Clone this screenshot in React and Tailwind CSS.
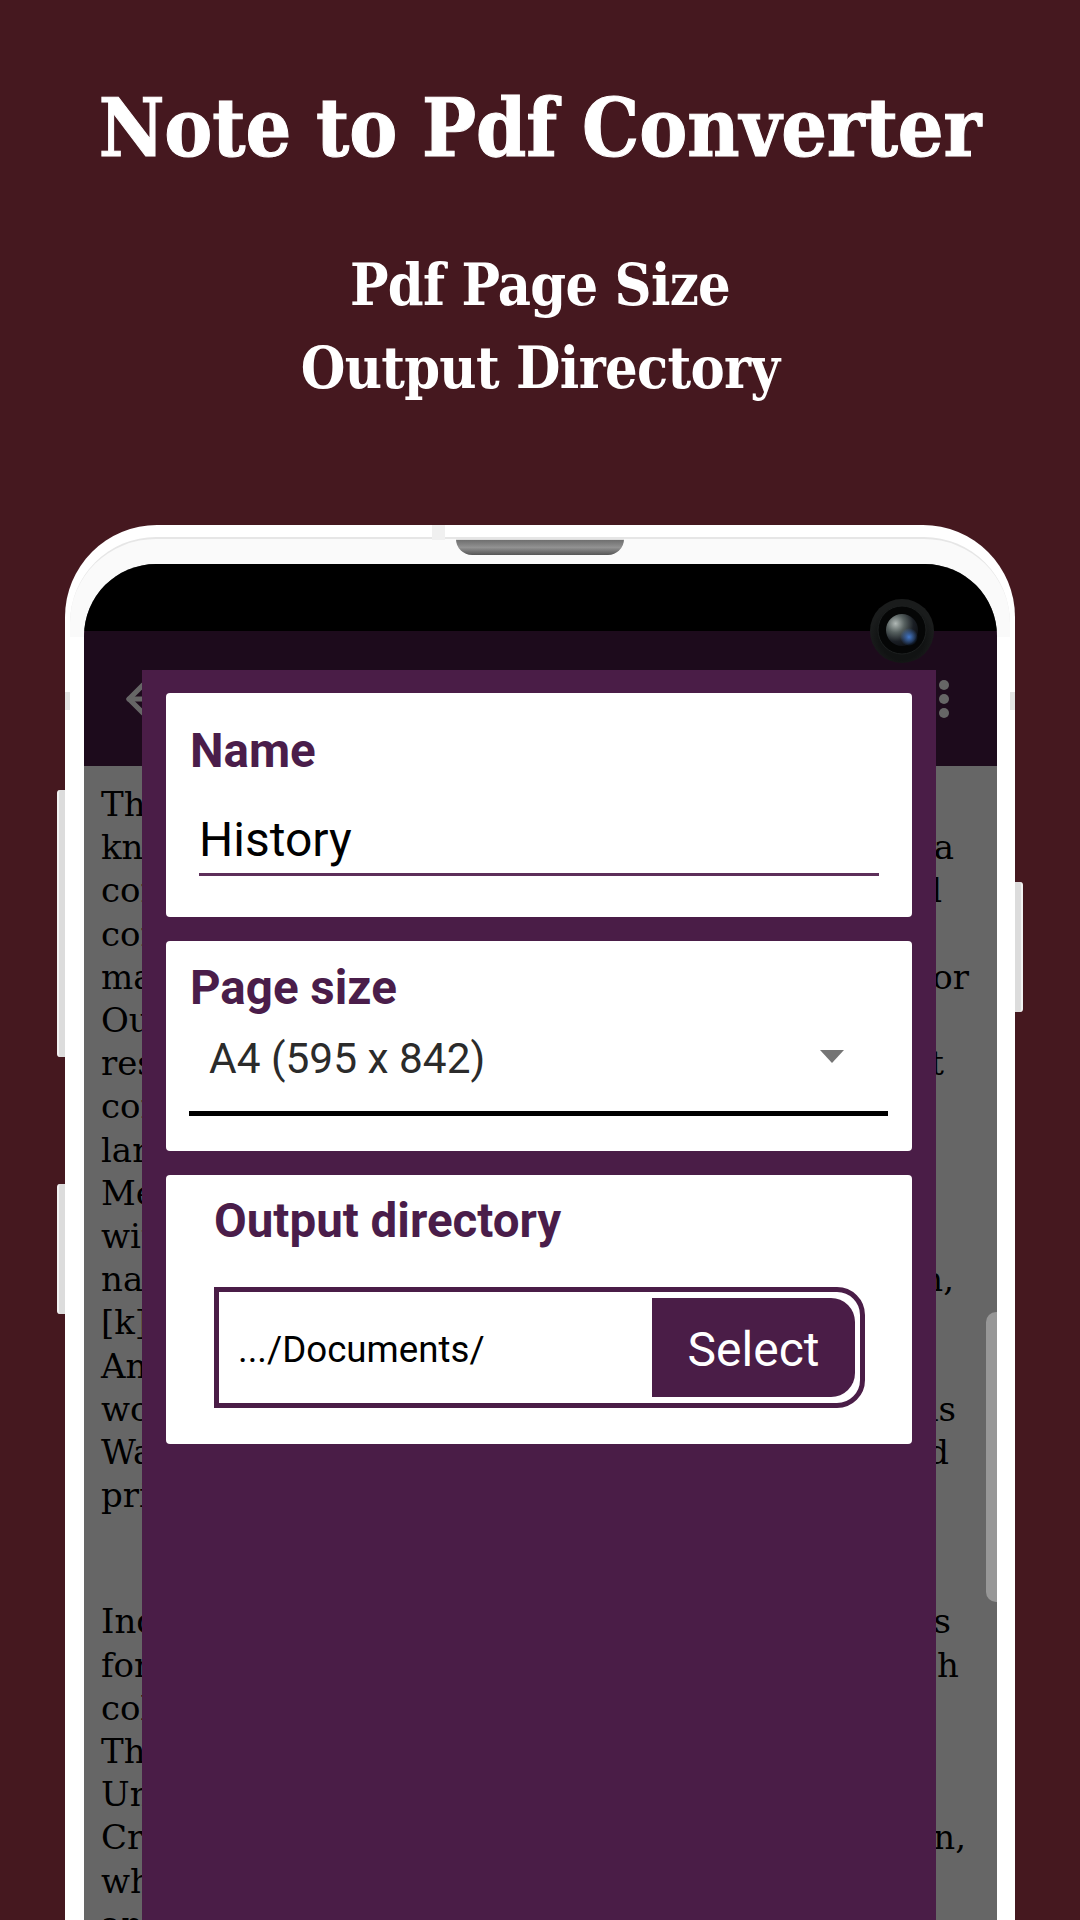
import React from "react";
import { ArrowLeft } from "lucide-react";

const rows = [
  { l: "The" }, { l: "known", r: "a", p: "pr-[43px]" }, { l: "continent", r: "l", p: "pr-[55px]" }, { l: "contain" },
  { l: "major", r: "or", p: "pr-[28px]" }, { l: "Outer" }, { l: "rest", r: "t", p: "pr-[53px]" }, { l: "common" },
  { l: "large" }, { l: "Mesopotamia" }, { l: "with" }, { l: "named", r: "n,", p: "pr-[43px]" }, { l: "[k]" },
  { l: "Ancient" }, { l: "world", r: "is", p: "pr-[41px]" }, { l: "Warfare", r: "d", p: "pr-[48px]" }, { l: "prior" },
  { l: "\u00a0", p: "leading-[41.5px]" }, { l: "\u00a0", p: "leading-[41.5px]" },
  { l: "India", r: "s", p: "pr-[46px]" }, { l: "for", r: "h", p: "pr-[38px]" }, { l: "colonies" }, { l: "The" },
  { l: "United" }, { l: "Crown", r: "n,", p: "pr-[31px]" }, { l: "which" }, { l: "and" },
];

function Camera() {
  return (
    <svg viewBox="0 0 66 66" className="absolute left-[804px] top-[73px] w-[66px] h-[66px]">
      <defs>
        <radialGradient id="lens" cx="30%" cy="30%" r="80%">
          <stop offset="0%" stopColor="#b0b8b5" />
          <stop offset="35%" stopColor="#56605f" />
          <stop offset="70%" stopColor="#1a1e24" />
          <stop offset="100%" stopColor="#0c0e12" />
        </radialGradient>
        <radialGradient id="glint" cx="50%" cy="50%" r="50%">
          <stop offset="0%" stopColor="#4377c8" />
          <stop offset="100%" stopColor="#4377c8" stopOpacity="0" />
        </radialGradient>
        <radialGradient id="shell" cx="50%" cy="60%" r="50%">
          <stop offset="70%" stopColor="#111313" />
          <stop offset="100%" stopColor="#1a1c1c" />
        </radialGradient>
      </defs>
      <circle cx="33" cy="33" r="32" fill="url(#shell)" />
      <circle cx="33" cy="32" r="24" fill="#050606" stroke="#1d2020" strokeWidth="1" />
      <circle cx="33" cy="32" r="16" fill="url(#lens)" />
      <circle cx="40" cy="39" r="9" fill="url(#glint)" />
    </svg>
  );
}

function Card({ className, children }) {
  return <div className={`bg-white rounded-[4px] flex flex-col ${className}`}>{children}</div>;
}

export default function App() {
  return (
    <div className="w-[1080px] h-[1920px] overflow-hidden bg-[#45181f] flex flex-col items-center font-['Roboto',sans-serif]">
      <h1 className="mt-[76px] text-[80px] leading-[104px] font-bold text-white whitespace-nowrap tracking-[-0.1px] [-webkit-text-stroke:1px_white] font-['DejaVu_Serif_Condensed','DejaVu_Serif',serif]">
        Note to Pdf Converter
      </h1>
      <div className="mt-[63px] flex flex-col items-center text-[57px] leading-[83px] tracking-[-0.7px] font-bold text-white font-['DejaVu_Serif_Condensed','DejaVu_Serif',serif]">
        <span>Pdf Page Size</span>
        <span>Output Directory</span>
      </div>

      <div className="relative mt-[116px] w-[950px] flex-1 min-h-0 bg-white rounded-t-[92px] pt-[39px] pl-[19px] pr-[18px] flex flex-col">
        {/* hardware decoration */}
        <div className="absolute left-[5px] right-[5px] top-[12px] h-[100px] rounded-t-[86px] border-t-[2px] border-[#e6e6e6] bg-[#fafafa]"></div>
        <div className="absolute left-[367px] top-0 w-[13px] h-[15px] bg-[#f0f0f0]"></div>
        <div className="absolute left-[391px] top-[14px] w-[168px] h-[16px] rounded-b-[18px] border-t border-[#dddddd] bg-gradient-to-b from-[#6f6f6f] via-[#929292] to-[#565656]"></div>
        <div className="absolute left-0 top-[167px] w-[5px] h-[18px] bg-[#e4e4e4]"></div>
        <div className="absolute right-0 top-[167px] w-[5px] h-[18px] bg-[#e4e4e4]"></div>
        <div className="absolute left-[-8px] top-[265px] w-[8px] h-[267px] rounded-l-[3px] bg-[#dcdcdc] border-l-[2px] border-[#f2f2f2]"></div>
        <div className="absolute left-[-8px] top-[659px] w-[8px] h-[130px] rounded-l-[3px] bg-[#dcdcdc] border-l-[2px] border-[#f2f2f2]"></div>
        <div className="absolute right-[-8px] top-[357px] w-[8px] h-[130px] rounded-r-[3px] bg-[#dcdcdc] border-r-[2px] border-[#f2f2f2]"></div>

        {/* screen */}
        <div className="relative flex-1 min-h-0 overflow-hidden rounded-t-[72px] bg-white flex flex-col">
          <div className="h-[67px] shrink-0 bg-black"></div>
          <div className="h-[135px] shrink-0 bg-[#4a1d47] flex items-center justify-between pl-[35px] pr-[48px] text-white">
            <ArrowLeft size={48} strokeWidth={2.6} />
            <div className="flex flex-col gap-[4px]">
              <span className="w-[10px] h-[10px] rounded-full bg-white"></span>
              <span className="w-[10px] h-[10px] rounded-full bg-white"></span>
              <span className="w-[10px] h-[10px] rounded-full bg-white"></span>
            </div>
          </div>
          <div className="pt-[17px] pl-[17px] flex flex-col shrink-0 text-[34px] leading-[43.2px] text-black font-['DejaVu_Serif',serif]">
            {rows.map((row, i) => (
              <div key={i} className={`flex justify-between whitespace-nowrap ${row.p || ""}`}>
                <span>{row.l}</span>
                {row.r && <span>{row.r}</span>}
              </div>
            ))}
          </div>

          <div className="absolute inset-0 bg-black/60"></div>
          <div className="absolute right-0 top-[748px] w-[11px] h-[290px] rounded-l-[10px] bg-[#979797]"></div>

          {/* dialog */}
          <div className="absolute left-[58px] top-[106px] bottom-0 w-[794px] bg-[#4a1d47] p-[24px] pt-[23px] flex flex-col gap-[24px]">
            <Card className="h-[224px] pt-[32px]">
              <div className="pl-[24px] text-[47.5px] leading-[52px] font-bold text-[#4a1d4a]">Name</div>
              <div className="mt-[37px] ml-[33px] w-[680px] pb-[7px] border-b-[3px] border-[#5d2f5a] text-[48px] leading-[52px] text-black">
                History
              </div>
            </Card>
            <Card className="h-[210px] pt-[21px]">
              <div className="pl-[24px] text-[47.5px] leading-[52px] font-bold text-[#4a1d4a]">Page size</div>
              <div className="mt-[20px] ml-[23px] w-[699px] h-[82px] border-b-[5px] border-black flex items-start justify-between pl-[20px] pr-[44px] text-[42.4px] leading-[50px] text-[#2b2b2b]">
                <span>A4 (595 x 842)</span>
                <span className="mt-[16px] w-0 h-0 border-x-[12px] border-x-transparent border-t-[13px] border-t-[#757575]"></span>
              </div>
            </Card>
            <Card className="h-[269px] pt-[20px] pl-[48px]">
              <div className="text-[47.5px] leading-[52px] font-bold text-[#4a1d4a]">Output directory</div>
              <div className="mt-[40px] w-[651px] h-[121px] border-[5px] border-[#4a1d47] rounded-r-[28px] flex items-center justify-between pr-[5px]">
                <span className="pl-[19px] pt-[4px] text-[36.7px] leading-[44px] text-black">.../Documents/</span>
                <span className="w-[203px] h-[99px] bg-[#4a1d47] rounded-r-[24px] flex items-center justify-center pt-[4px] text-[48px] text-white">Select</span>
              </div>
            </Card>
          </div>
        </div>

        <Camera />
      </div>
    </div>
  );
}
